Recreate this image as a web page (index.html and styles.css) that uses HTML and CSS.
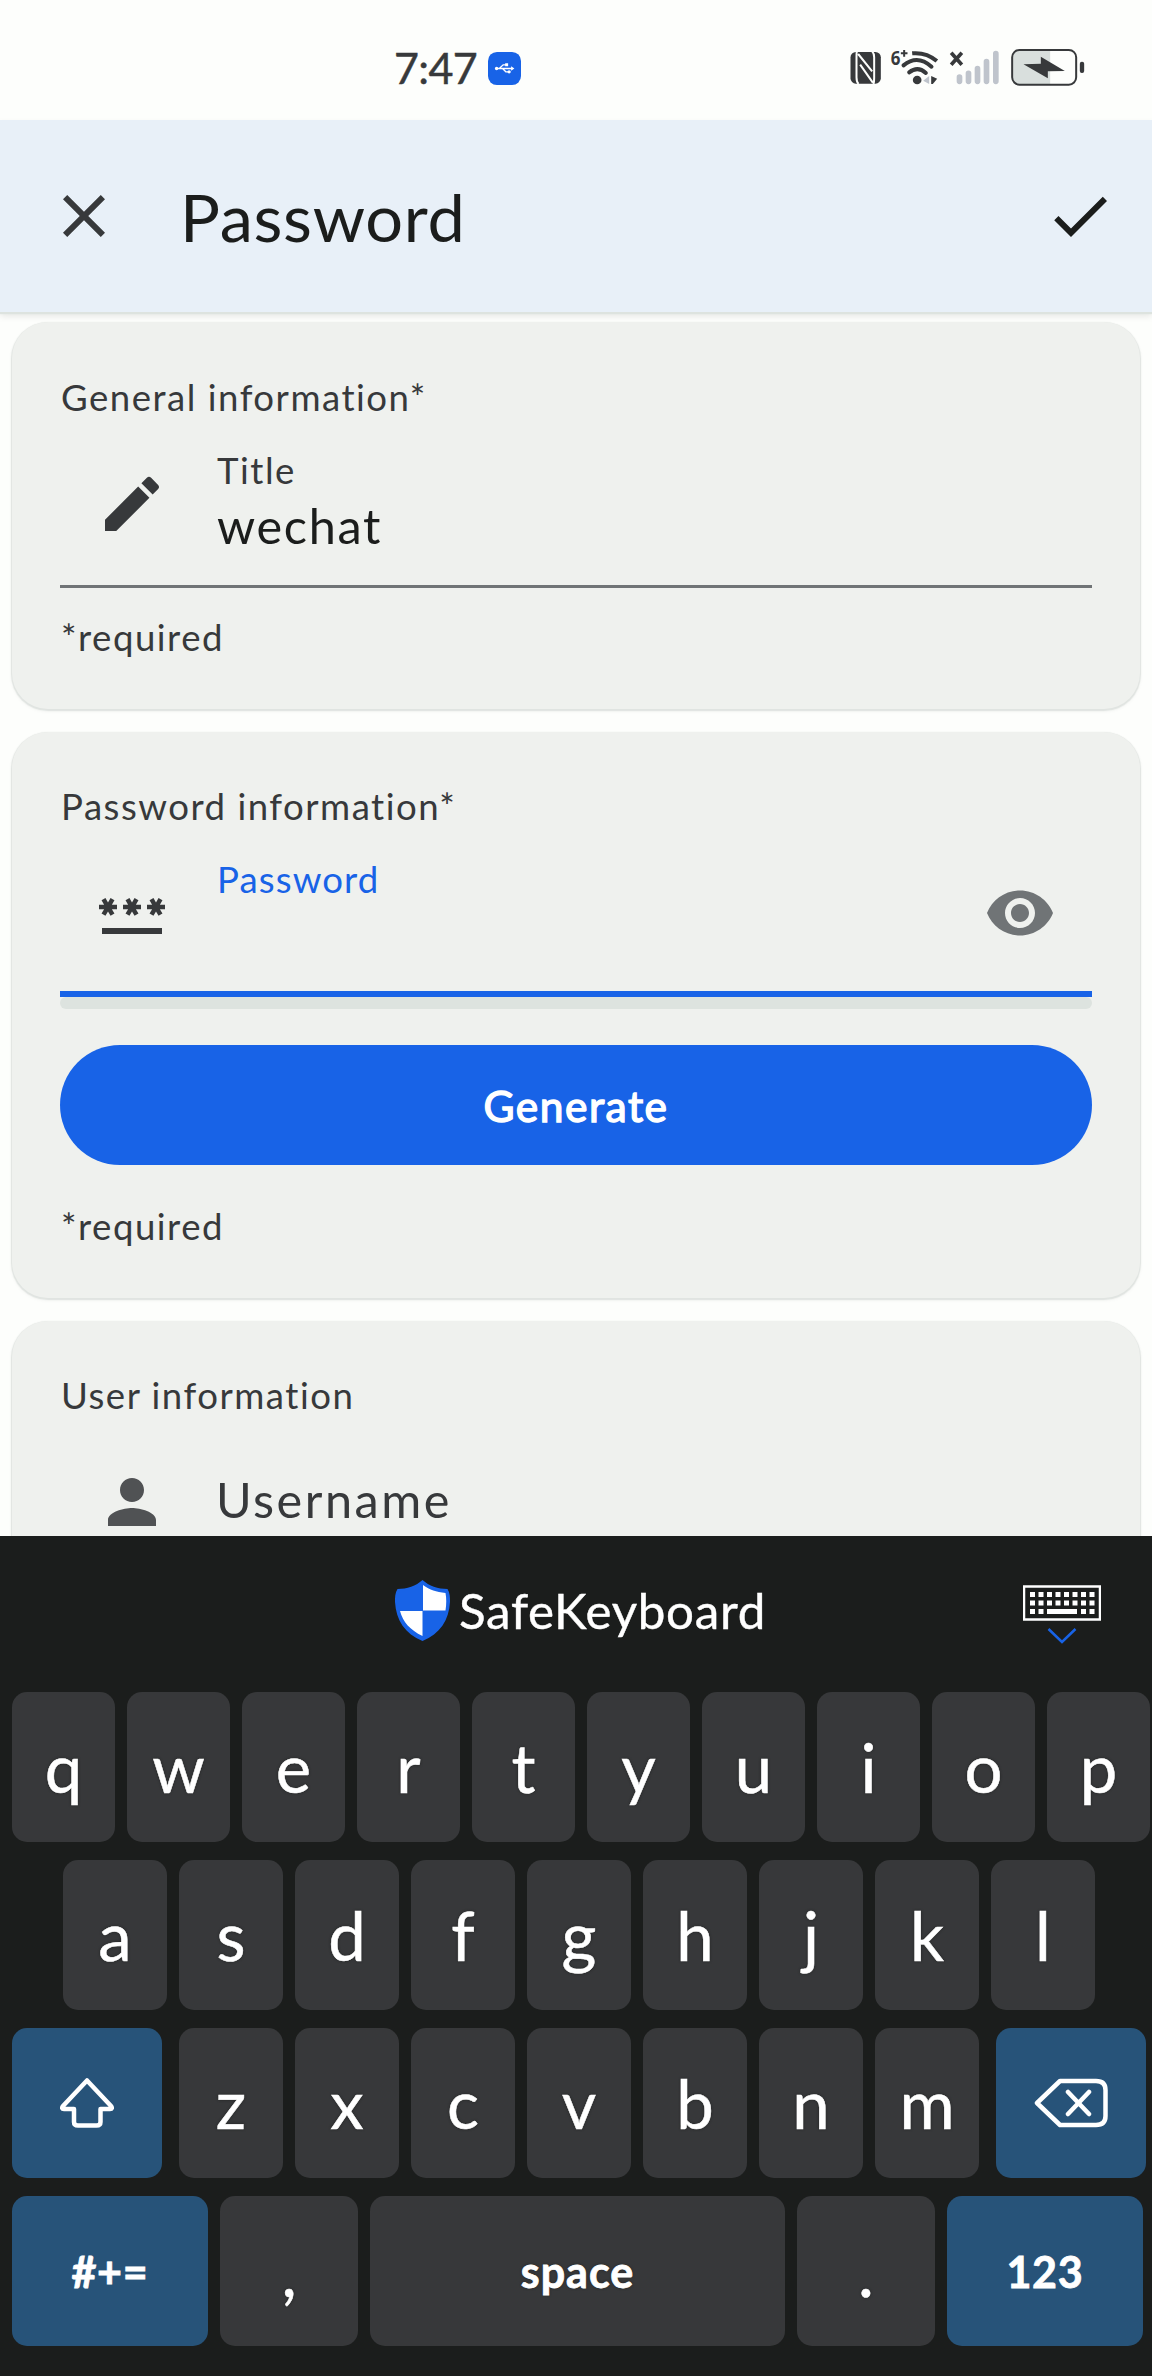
FILE: index.html
```html
<!DOCTYPE html>
<html lang="en">
<head>
<meta charset="utf-8">
<title>Password</title>
<link rel="stylesheet" href="styles.css">
</head>
<body>
<div class="screen">
  <header class="status">
    <span class="time">7:47</span>
    <svg class="usb" viewBox="0 0 100 100"><rect width="100" height="100" rx="27" fill="#1863e7"/><g fill="none" stroke="#fff" stroke-width="4"><path d="M24 50h48M34 50l12-11h9M44 50l10 10h8"/></g><circle cx="26" cy="50" r="5" fill="#fff"/><path d="M70 43l10 7-10 7zM52 34h9v9h-9z" fill="#fff"/><circle cx="64" cy="60" r="5" fill="#fff"/></svg>
    <svg class="indicators" viewBox="45 45 725 135">
      <rect x="61" y="66" width="91" height="95" rx="16" fill="#37393b"/>
      <path d="M80 64q-1 6-1 16v62q0 14 6 20M84 72l42 52M126 64q6 6 6 18v62q0 12-2 18M90 104l38 54" fill="none" stroke="#fdfefc" stroke-width="6"/>
      <text x="182" y="105" class="gen" textLength="29" lengthAdjust="spacingAndGlyphs">6</text>
      <path d="M212 70h20M222 60v20" stroke="#37393b" stroke-width="6"/>
      <g fill="none" stroke="#37393b" stroke-width="12" stroke-linecap="round">
        <path d="M246 70q42-4 74 23" stroke-linecap="butt"/>
        <path d="M220 106q42-34 84 4M237 127q26-20 50 2"/>
      </g>
      <circle cx="261" cy="150" r="13" fill="#37393b"/>
      <path d="M297 138v24l-18-10z" fill="#bfc4cc"/><path d="M303 138l18 8-13 16h-5z" fill="#37393b"/>
      <path d="M363 68l32 36M395 68l-32 36" stroke="#37393b" stroke-width="11"/>
      <g stroke="#bfc4cc" stroke-width="17" stroke-linecap="round"><path d="M388 141v13M415 130v24M442 116v38M469 95v59M497 71v83"/></g>
      <path d="M565 62h95v102h-95q-16-4-16-20V80q0-14 16-18z" fill="#d9dfdd"/>
      <rect x="546" y="60" width="192" height="104" rx="22" fill="none" stroke="#37393b" stroke-width="6"/>
      <path d="M580 103l52-2v-21l72 43-51 1v21z" fill="#37393b"/>
      <rect x="749" y="95" width="13" height="34" rx="6" fill="#37393b"/>
    </svg>
  </header>

  <header class="appbar">
    <svg class="icon" viewBox="0 0 24 24"><path d="M19 6.41L17.59 5 12 10.59 6.41 5 5 6.41 10.59 12 5 17.59 6.41 19 12 13.41 17.59 19 19 17.59 13.41 12z"/></svg>
    <h1 class="page-title">Password</h1>
    <svg class="icon" viewBox="0 0 24 24"><path d="M9 16.17L4.83 12l-1.42 1.41L9 19 21 7l-1.41-1.41z"/></svg>
  </header>

  <main class="content">
    <section class="card">
      <h2 class="caption">General information*</h2>
      <div class="field">
        <svg class="icon" viewBox="0 0 24 24"><path d="M3 17.25V21h3.75L17.81 9.94l-3.75-3.75L3 17.25zM20.71 7.04c.39-.39.39-1.02 0-1.41l-2.34-2.34a.9959.9959 0 00-1.41 0l-1.83 1.83 3.75 3.75 1.83-1.83z"/></svg>
        <div class="field-text">
          <div class="caption">Title</div>
          <div class="value">wechat</div>
        </div>
      </div>
      <div class="caption hint">*required</div>
    </section>

    <section class="card card-password">
      <h2 class="caption">Password information*</h2>
      <div class="field focused">
        <svg class="icon" viewBox="0 0 24 24"><path d="M2 17h20v2H2v-2zm1.15-4.05L4 11.47l.85 1.48 1.3-.75-.85-1.48H7v-1.5H5.3l.85-1.47L4.85 7 4 8.47 3.15 7l-1.3.75.85 1.47H1v1.5h1.7l-.85 1.48 1.3.75zm6.7-.75l1.3.75.85-1.48.85 1.48 1.3-.75-.85-1.48H15v-1.5h-1.7l.85-1.47-1.3-.75L12 8.47 11.15 7l-1.3.75.85 1.47H9v1.5h1.7l-.85 1.48zM23 9.22h-1.7l.85-1.47-1.3-.75L20 8.47 19.15 7l-1.3.75.85 1.47H17v1.5h1.7l-.85 1.48 1.3.75.85-1.48.85 1.48 1.3-.75-.85-1.48H23v-1.5z"/></svg>
        <div class="field-text"><div class="caption label">Password</div></div>
        <svg class="icon eye" viewBox="0 0 24 24"><path d="M12 4.5C7 4.5 2.73 7.61 1 12c1.73 4.39 6 7.5 11 7.5s9.27-3.11 11-7.5c-1.73-4.39-6-7.5-11-7.5zM12 17c-2.76 0-5-2.24-5-5s2.24-5 5-5 5 2.24 5 5-2.24 5-5 5zm0-8c-1.66 0-3 1.34-3 3s1.34 3 3 3 3-1.34 3-3-1.34-3-3-3z"/></svg>
      </div>
      <div class="strength"></div>
      <button class="generate">Generate</button>
      <div class="caption hint">*required</div>
    </section>

    <section class="card card-user">
      <h2 class="caption">User information</h2>
      <div class="field">
        <svg class="icon user" viewBox="0 0 24 24"><path d="M12 12c2.21 0 4-1.79 4-4s-1.79-4-4-4-4 1.79-4 4 1.79 4 4 4zm0 2c-2.67 0-8 1.34-8 4v2h16v-2c0-2.66-5.33-4-8-4z"/></svg>
        <div class="placeholder">Username</div>
      </div>
    </section>
  </main>

  <section class="keyboard">
    <div class="kb-head">
      <div class="brand">
        <svg class="shield" viewBox="0 0 55 61"><path d="M27.5 0C21 6 12 9 2.5 9 0 13 0 17 0 22c1 18 10 32 27.5 39C45 54 54 40 55 22c0-5 0-9-2.5-13C43 9 34 6 27.5 0z" fill="#1863e7"/><path d="M28 5c7 5 13 7 22.5 8 1 5 1 11 0 17.5H28zM27.5 31v25C15 50 8 42 5 31z" fill="#fff"/></svg>
        <span>SafeKeyboard</span>
      </div>
      <svg class="hide" viewBox="0 0 78 60"><rect x="1" y="1.5" width="76" height="33" fill="none" stroke="#fff" stroke-width="2.5"/><g stroke="#fff" stroke-width="5"><path d="M7 9.5h65M7 18h65" stroke-dasharray="5 3.5"/><path d="M7 26.5h5M15.5 26.5h5M24 26.5h30M58 26.5h5M66.5 26.5h5"/></g><path d="M25.500 44L39 57l13.500-13" fill="none" stroke="#1863e7" stroke-width="2.5"/></svg>
    </div>
    <div class="row row-top"><kbd>q</kbd><kbd>w</kbd><kbd>e</kbd><kbd>r</kbd><kbd>t</kbd><kbd>y</kbd><kbd>u</kbd><kbd>i</kbd><kbd>o</kbd><kbd>p</kbd></div>
    <div class="row row-home"><kbd>a</kbd><kbd>s</kbd><kbd>d</kbd><kbd>f</kbd><kbd>g</kbd><kbd>h</kbd><kbd>j</kbd><kbd>k</kbd><kbd>l</kbd></div>
    <div class="row row-bottom">
      <kbd class="fn shift"><svg width="54" height="50" viewBox="0 0 54 50" fill="none" stroke="#fff" stroke-width="4.5" stroke-linejoin="round"><path d="M27 2.500L51 28q2 3-1 3H40.500v13q0 3.500-4 3.500H18q-4 0-4-3.500V31H4q-3 0-1-3z"/></svg></kbd>
      <kbd>z</kbd><kbd>x</kbd><kbd>c</kbd><kbd>v</kbd><kbd>b</kbd><kbd>n</kbd><kbd>m</kbd>
      <kbd class="fn back"><svg width="74" height="50" viewBox="0 0 74 50" fill="none" stroke="#fff" stroke-width="4.5" stroke-linecap="round" stroke-linejoin="round"><path d="M3 25L26 3h36q9.500 0 9.500 9v26q0 9-9.500 9H26zM34 14l21 22M55 14L34 36"/></svg></kbd>
    </div>
    <div class="row row-last"><kbd class="fn word">#+=</kbd><kbd>,</kbd><kbd class="word space">space</kbd><kbd>.</kbd><kbd class="fn word">123</kbd></div>
  </section>
</div>
</body>
</html>
```
FILE: styles.css
```css
* { box-sizing: border-box; }

body {
  margin: 0;
  background: #fdfefc;
  font-family: Lato, "Noto Sans", sans-serif;
  font-variant-ligatures: none;
  color: #37393b;
}

.screen {
  width: 1152px;
  height: 2376px;
  display: flex;
  flex-direction: column;
  overflow: hidden;
}

.icon { width: 72px; height: 72px; flex: none; fill: #37393b; }

/* Status bar */
.status {
  height: 120px;
  flex: none;
  display: flex;
  align-items: flex-start;
  padding: 43px 65px 0 394px;
}
.time {
  width: 94px;
  font-size: 43px;
  line-height: 50px;
  letter-spacing: -.6px;
  -webkit-text-stroke: .5px #37393b;
}
.usb { width: 33px; height: 33px; margin-top: 9px; }
.indicators { width: 242px; height: 45px; margin: 2px 0 0 auto; }
.gen { font: 700 60px "Noto Sans", sans-serif; fill: #37393b; }

/* App bar */
.appbar {
  position: relative;
  height: 192px;
  flex: none;
  display: flex;
  align-items: center;
  padding: 0 36px 0 48px;
  background: #e8f0f8;
  box-shadow: 0 2px 1px #dde3df, 0 4px 7px rgba(0, 0, 0, .1);
}
.appbar .icon:last-child { fill: #1b1d1c; }
.page-title {
  flex: 1;
  margin: 0 0 0 60px;
  font-size: 66.7px;
  font-weight: 400;
  letter-spacing: .7px;
  color: #1b1d1c;
}

/* Form */
.content {
  flex: 1;
  min-height: 0;
  overflow: hidden;
  padding: 10px 12px 0;
}
.card {
  height: 387px;
  margin-bottom: 23px;
  padding: 50px 48px 0;
  border-radius: 36px;
  background: #eff1ee;
  box-shadow: 0 1px 1px 1px #e0e4e1, 0 2px 4px rgba(0, 0, 0, .06);
}
.card-password { height: 566px; padding-top: 49px; }
.card-user { padding-top: 49px; }
.caption {
  margin: 0;
  padding-left: 1px;
  font-size: 36.6px;
  font-weight: 400;
  line-height: 50px;
  letter-spacing: 1.5px;
  white-space: nowrap;
}
.field {
  display: flex;
  height: 166px;
  padding: 0 36px;
  border-bottom: 3px solid #707476;
}
.field .icon { margin-top: 46px; }
.field-text { flex: 1; padding: 23px 0 0 48px; }
.value {
  padding-left: 1px;
  font-size: 48.6px;
  line-height: 60px;
  letter-spacing: 1.65px;
  color: #1b1d1c;
}
.focused { border-bottom: 6px solid #1863e7; }
.label { color: #1863e7; letter-spacing: 1.1px; }
.field .eye { fill: #707476; }
.field .user { fill: #505254; }
.placeholder {
  padding: 49px 0 0 48px;
  font-size: 48.6px;
  line-height: 60px;
  letter-spacing: 2.5px;
}
.hint { margin-top: 24px; }
.strength { height: 12px; border-radius: 6px; background: #dde3df; }
.generate {
  display: block;
  width: 100%;
  height: 120px;
  margin: 36px 0;
  border: 0;
  border-radius: 60px;
  background: #1863e7;
  color: #fff;
  font: 400 42.5px Lato, sans-serif;
  letter-spacing: 1.5px;
  -webkit-text-stroke: 1.4px #fff;
}

/* Keyboard */
.keyboard {
  position: relative;
  height: 840px;
  flex: none;
  background: #1b1d1c;
  color: #fff;
}
.kb-head {
  height: 156px;
  display: flex;
  align-items: flex-start;
  justify-content: space-between;
  padding: 44px 51px 0 395px;
}
.brand {
  display: flex;
  align-items: flex-start;
  gap: 9px;
  font-size: 49.3px;
  line-height: 61px;
  letter-spacing: .7px;
  -webkit-text-stroke: .4px #fff;
}
.shield { width: 55px; height: 61px; }
.hide { width: 78px; height: 60px; margin-top: 5px; }
.row { display: flex; gap: 12px; margin-bottom: 18px; padding-left: 12px; }
kbd {
  display: flex;
  justify-content: center;
  align-items: center;
  width: 104px;
  height: 150px;
  border-radius: 15px;
  background: #37383a;
  font: 400 67px Lato, sans-serif;
  text-shadow: 0 0 3px #1b1d1c;
  -webkit-text-stroke: .5px #fff;
}
.row-top kbd { width: 103px; }
.row-home { padding-left: 63px; }
kbd.fn { background: #275379; text-shadow: none; }
kbd.shift { width: 150px; margin-right: 5px; }
kbd.back { width: 150px; margin-left: 5px; }
.row-last { display: grid; grid-template-columns: 196px 138px 415px 138px 196px; }
.row-last kbd { width: auto; }
kbd.word { font-size: 43px; font-weight: 700; letter-spacing: .8px; -webkit-text-stroke: .8px #fff; }
kbd.space { letter-spacing: 1px; }
```
